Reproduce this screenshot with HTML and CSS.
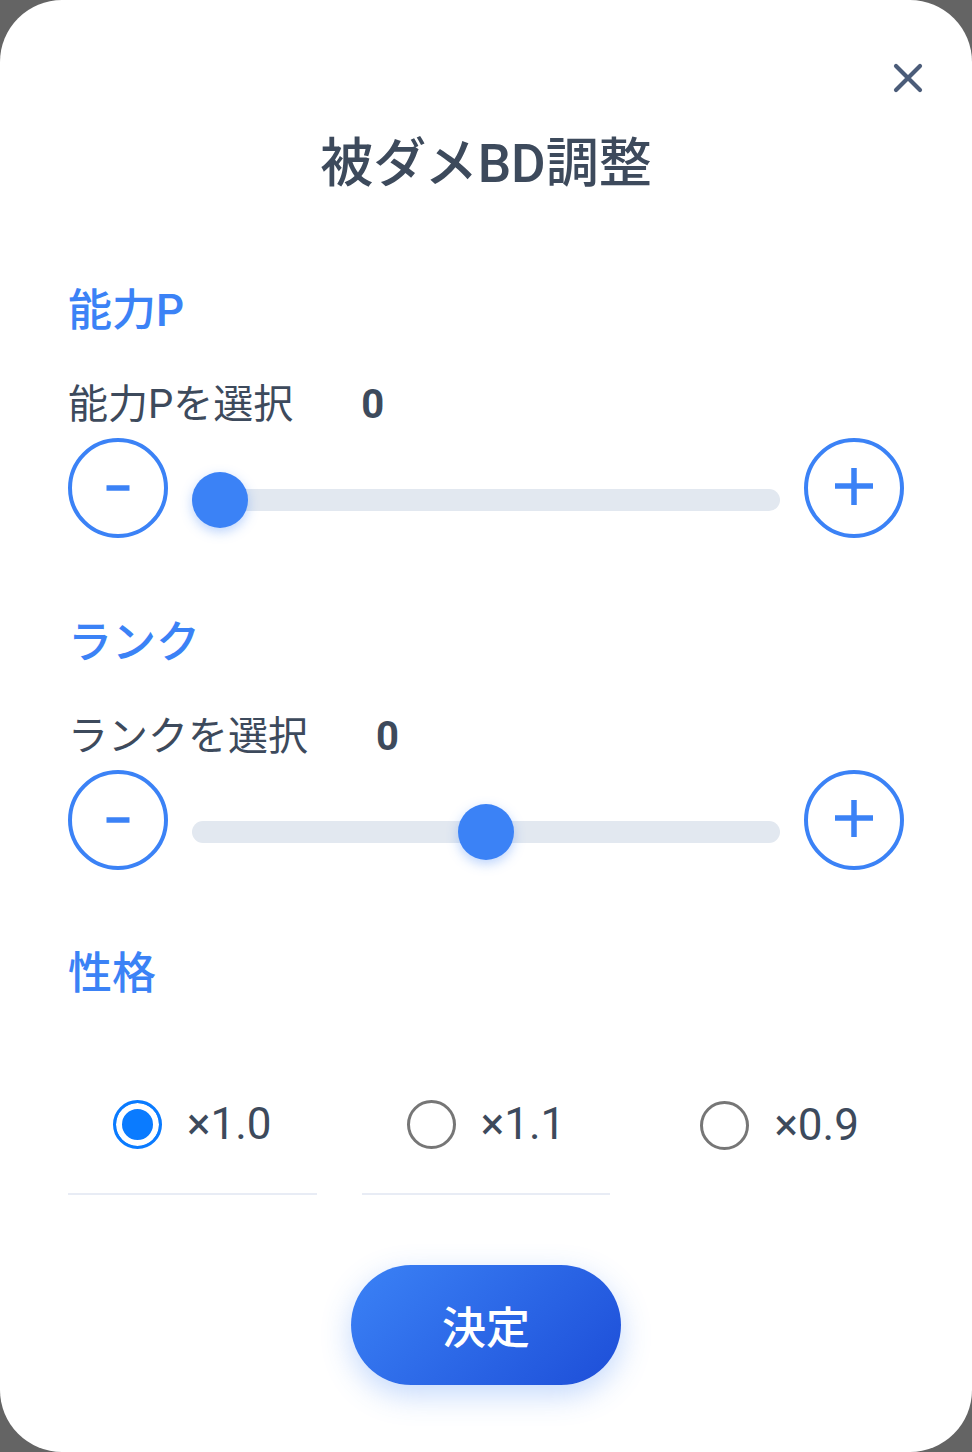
FILE: index.html
```html
<html>
<head>
  <meta charset="utf-8">
  <link rel="stylesheet" href="styles.css">
</head>
<body>
  <div class="card">
    <div class="close-row">
      <button class="close">
        <svg width="30" height="30" viewBox="0 0 30 30"><path d="M3 3L27 27M27 3L3 27" stroke="#4b5c79" stroke-width="4.2" stroke-linecap="round"/></svg>
      </button>
    </div>

    <h1 class="title">被ダメBD調整</h1>

    <!-- 能力P -->
    <div class="section first">
      <h2 class="sec-title">能力P</h2>
      <div class="label-row">
        <span class="label">能力Pを選択</span>
        <span class="value">0</span>
      </div>
      <div class="slider-row">
        <button class="step">
          <svg width="40" height="40" viewBox="0 0 40 40"><path d="M8.5 20H31.5" stroke="#3b82f6" stroke-width="5.5"/></svg>
        </button>
        <div class="track"><div class="thumb" style="left: 0px"></div></div>
        <button class="step">
          <svg width="40" height="40" viewBox="0 0 40 40"><path d="M1 18H39M20 -1V37" stroke="#3b82f6" stroke-width="5.5"/></svg>
        </button>
      </div>
    </div>

    <!-- ランク -->
    <div class="section second">
      <h2 class="sec-title">ランク</h2>
      <div class="label-row">
        <span class="label">ランクを選択</span>
        <span class="value">0</span>
      </div>
      <div class="slider-row">
        <button class="step">
          <svg width="40" height="40" viewBox="0 0 40 40"><path d="M8.5 20H31.5" stroke="#3b82f6" stroke-width="5.5"/></svg>
        </button>
        <div class="track"><div class="thumb" style="left: calc(50% - 28px)"></div></div>
        <button class="step">
          <svg width="40" height="40" viewBox="0 0 40 40"><path d="M1 18H39M20 -1V37" stroke="#3b82f6" stroke-width="5.5"/></svg>
        </button>
      </div>
    </div>

    <!-- 性格 -->
    <div class="section third">
      <h2 class="sec-title">性格</h2>
      <div class="options">
        <label class="opt"><input type="radio" name="seikaku" checked><span>×1.0</span></label>
        <label class="opt"><input type="radio" name="seikaku"><span>×1.1</span></label>
        <label class="opt"><input type="radio" name="seikaku"><span>×0.9</span></label>
      </div>
    </div>

    <div class="footer">
      <button class="ok">決定</button>
    </div>
  </div>
</body>
</html>
```

FILE: styles.css
```css
* {
    box-sizing: border-box;
    margin: 0;
    padding: 0;
}

body {
    background-color: #646464;
    font-family: "Roboto", "Noto Sans CJK JP", sans-serif;
    color: #3d4a5c;
}

.card {
    width: 972px;
    height: 1452px;
    background-color: white;
    border-radius: 62px;
    padding: 63px 68px 0 68px;
}

button {
    background: none;
    border: 0;
    font-family: inherit;
    cursor: pointer;
}

.close-row {
    display: flex;
    justify-content: flex-end;
    height: 30px;
    margin-right: -19px;
}

.close {
    width: 30px;
    height: 30px;
    display: flex;
}

.title {
    margin-top: 41px;
    text-align: center;
    font-size: 53px;
    line-height: 60px;
    font-weight: 500;
    color: #3d4a5c;
}

.section.first {
    margin-top: 89px;
}

.section.second {
    margin-top: 77px;
}

.section.third {
    margin-top: 76px;
}

.sec-title {
    font-size: 44px;
    line-height: 56px;
    font-weight: 500;
    color: #3b82f6;
}

.label-row {
    margin-top: 41px;
    display: flex;
    font-size: 40px;
    line-height: 50px;
}

.value {
    margin-left: 68px;
    font-weight: bold;
}

.slider-row {
    margin-top: 8px;
    display: flex;
    align-items: center;
    height: 100px;
}

.step {
    width: 100px;
    height: 100px;
    border: 4px solid #3b82f6;
    border-radius: 50%;
    display: flex;
    align-items: center;
    justify-content: center;
}

.track {
    flex: 1;
    height: 22px;
    margin: 24px 24px 0 24px;
    border-radius: 11px;
    background-color: #e2e8f0;
    position: relative;
}

.thumb {
    position: absolute;
    top: 50%;
    width: 56px;
    height: 56px;
    margin-top: -28px;
    border-radius: 50%;
    background-color: #3b82f6;
    box-shadow: 0 4px 12px rgba(59, 130, 246, 0.35);
}

.options {
    margin-top: 53px;
    display: grid;
    grid-template-columns: 1fr 1fr 1fr;
    column-gap: 45px;
}

.opt {
    height: 140px;
    display: flex;
    align-items: center;
    justify-content: center;
    font-size: 44px;
    color: #3d4a5c;
    cursor: pointer;
}

.opt:not(:last-child) {
    border-bottom: 2px solid #e8ecf5;
}

.opt input {
    appearance: none;
    -webkit-appearance: none;
    width: 49px;
    height: 49px;
    margin: 0 25px 0 0;
    border: 3px solid #767676;
    border-radius: 50%;
    background-color: white;
}

.opt input:checked {
    border: 3.5px solid #0a7bff;
    background-color: #0a7bff;
    box-shadow: inset 0 0 0 6px white;
}

.footer {
    margin-top: 70px;
    display: flex;
    justify-content: center;
}

.ok {
    width: 270px;
    height: 120px;
    border-radius: 60px;
    background: linear-gradient(135deg, #3b82f6, #1d4ed8);
    box-shadow: 0 10px 30px rgba(59, 130, 246, 0.3);
    color: white;
    font-size: 44px;
    font-weight: 500;
}
```
